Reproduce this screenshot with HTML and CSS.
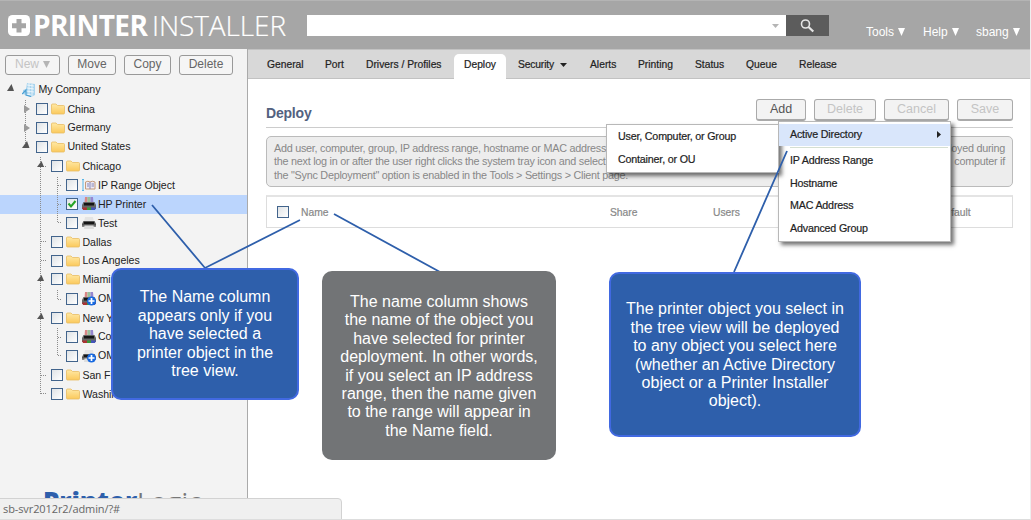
FILE: index.html
```html
<!DOCTYPE html>
<html lang="en">
<head>
<meta charset="utf-8">
<title>Printer Installer</title>
<link rel="stylesheet" href="styles.css">
</head>
<body>
<svg class="defs" width="0" height="0">
  <defs>
    <linearGradient id="fold" x1="0" y1="0" x2="0" y2="1"><stop offset="0" stop-color="#ffe9a6"/><stop offset="1" stop-color="#fbc95c"/></linearGradient>
    <symbol id="folder" viewBox="0 0 14 12"><path d="M.5 2Q.5 1 1.500 1H5L6.500 2.500H12.500Q13.500 2.500 13.500 3.500V10Q13.500 11 12.500 11H1.500Q.5 11 .5 10Z" fill="url(#fold)" stroke="#e9bd62" stroke-width=".8"/></symbol>
    <symbol id="printer" viewBox="0 0 14 14"><path d="M3 1H11L12 6H2Z" fill="#e4e4e4"/><path d="M1.500 5H12.500L14 8V11H0V8Z" fill="#555"/><path d="M2 6H12V8H2Z" fill="#151515"/><path d="M0 9.500H14V11H0Z" fill="#888"/><path d="M2.500 9.500H11.500L12 13H2Z" fill="#ddd"/></symbol>
    <symbol id="color-printer" viewBox="0 0 14 14"><path d="M3 0H5.500V6H2.500Z" fill="#d98686"/><path d="M5.500 0H8.500V6H5.500Z" fill="#9ac09a"/><path d="M8.500 0H11L11.500 6H8.500Z" fill="#9686cf"/><path d="M1.500 5H12.500L14 8V12H0V8Z" fill="#666"/><path d="M2 6H12V8.500H2Z" fill="#151515"/><path d="M0 10.500H5V13H1Z" fill="#a33"/><path d="M5 10.500H9V13H5Z" fill="#3a9a3a"/><path d="M9 10.500H14L13 13H9Z" fill="#45b"/></symbol>
    <symbol id="plus-badge" viewBox="0 0 14 14"><circle cx="9.500" cy="9" r="4.500" fill="#1769e0"/><path d="M9.500 6V12M6.500 9H12.500" stroke="#fff" stroke-width="1.700"/></symbol>
  </defs>
</svg>
<div class="app">
  <header class="header">
    <div class="brand">
      <svg class="brand-mark" width="22" height="21" viewBox="0 0 22 21"><rect width="22" height="21" rx="4.500" fill="#fff"/><path d="M11 4V17.500M4 10.700H18" stroke="#a6a6a6" stroke-width="5"/></svg>
      <span class="brand-bold">PRINTER</span><span class="brand-light">INSTALLER</span>
    </div>
    <div class="search"><div class="search-field"><svg width="7" height="4"><path d="M0 0H7L3.500 4Z" fill="#b5b5b5"/></svg></div>
      <div class="search-btn"><svg width="15" height="14" viewBox="0 0 15 14"><circle cx="5.500" cy="5" r="4" fill="none" stroke="#e6e6e6" stroke-width="1.600"/><path d="M8.500 8L13.300 12.500" stroke="#e6e6e6" stroke-width="2.200"/></svg></div>
    </div>
    <nav class="user-nav">
      <span class="tools">Tools <svg width="7" height="8"><path d="M0 0H7L3.500 8Z" fill="#fff"/></svg></span>
      <span class="help">Help <svg width="7" height="8"><path d="M0 0H7L3.500 8Z" fill="#fff"/></svg></span>
      <span class="user">sbang <svg width="7" height="8"><path d="M0 0H7L3.500 8Z" fill="#fff"/></svg></span>
    </nav>
  </header>
  <div class="body">
    <aside class="sidebar">
      <div class="tree-actions">
        <div class="btn off new">New <svg width="7" height="7"><path d="M0 0H7L3.500 7Z" fill="#b5b5b5"/></svg></div><div class="btn move">Move</div><div class="btn copy">Copy</div><div class="btn del">Delete</div>
      </div>
      <div class="tree">
        <div class="row l0"><svg width="14" height="15" viewBox="0 0 14 15"><path d="M5 1L13 2V13L9 15L1 12V8L4 7Z" fill="#a9d4ee"/><path d="M5 3L12 4M5 6L12 7M4 9L12 10M3 12L9 13M7 1V13M10 2V14" stroke="#fff" stroke-width=".7"/><path d="M0 12L4 8V13L9 14.500" stroke="#4b9fd3" stroke-width="1.200" fill="none"/></svg><span>My Company</span></div>
        <div class="row l1"><i class="check"></i><svg width="14" height="12"><use href="#folder"/></svg><span>China</span></div>
        <div class="row l1"><i class="check"></i><svg width="14" height="12"><use href="#folder"/></svg><span>Germany</span></div>
        <div class="row l1"><i class="check"></i><svg width="14" height="12"><use href="#folder"/></svg><span>United States</span></div>
        <div class="row l2"><i class="check"></i><svg width="14" height="12"><use href="#folder"/></svg><span>Chicago</span></div>
        <div class="row l3"><i class="check"></i><svg width="14" height="12" viewBox="0 0 14 12"><path d="M0 .5H2M0 11.500H2M1 .5V11.500" stroke="#55b4e8" fill="none"/><path d="M3.500 3Q6 1.500 8 3Q10.500 1.500 13 3V10H3.500Z" fill="#eceaf5" stroke="#c49a7a"/><path d="M8 3V10M5 5H7M5 7H7M9.500 5H12M9.500 7H12" stroke="#8585b5"/></svg><span>IP Range Object</span></div>
        <div class="row l3 selected"><i class="check"><svg width="10" height="10" viewBox="0 0 10 10"><path d="M1.500 4.500L4 7.500L8.500 2" fill="none" stroke="#25a325" stroke-width="2"/></svg></i><svg width="14" height="14"><use href="#color-printer"/></svg><span>HP Printer</span></div>
        <div class="row l3"><i class="check"></i><svg width="14" height="14"><use href="#printer"/></svg><span>Test</span></div>
        <div class="row l2"><i class="check"></i><svg width="14" height="12"><use href="#folder"/></svg><span>Dallas</span></div>
        <div class="row l2"><i class="check"></i><svg width="14" height="12"><use href="#folder"/></svg><span>Los Angeles</span></div>
        <div class="row l2"><i class="check"></i><svg width="14" height="12"><use href="#folder"/></svg><span>Miami</span></div>
        <div class="row l3"><i class="check"></i><svg width="14" height="14"><use href="#color-printer"/><use href="#plus-badge"/></svg><span>OM</span></div>
        <div class="row l2"><i class="check"></i><svg width="14" height="12"><use href="#folder"/></svg><span>New Y</span></div>
        <div class="row l3"><i class="check"></i><svg width="14" height="14"><use href="#color-printer"/></svg><span>Co</span></div>
        <div class="row l3"><i class="check"></i><svg width="14" height="14"><use href="#printer"/><use href="#plus-badge"/></svg><span>OM</span></div>
        <div class="row l2"><i class="check"></i><svg width="14" height="12"><use href="#folder"/></svg><span>San Fr</span></div>
        <div class="row l2"><i class="check"></i><svg width="14" height="12"><use href="#folder"/></svg><span>Washin</span></div>
        <svg class="guides" width="70" height="330" viewBox="0 80 70 330">
          <g fill="none" stroke="#8c8c8c" stroke-dasharray="1 1">
            <path d="M25.500 100V146M40.500 157V394M57.500 177V223M57.500 290V299M57.500 328V356"/>
            <path d="M41 166.500H46M41 241.500H46M41 260.500H46M41 375.500H46M41 393.500H46M58 185.500H62M58 204.500H62M58 222.500H62M58 299.500H62M58 337.500H62M58 355.500H62"/>
          </g>
          <g fill="#555"><path d="M11.500 84L14 91H7Z"/><path d="M27 141L29.500 148H22Z"/><path d="M41.500 161L44 167H37Z"/><path d="M41.500 275L44 281H37Z"/><path d="M41.500 313L44 319H37Z"/></g>
          <g fill="#999"><path d="M24 105L30 109L24 113Z"/><path d="M24 124L30 128L24 132Z"/></g>
        </svg>
      </div>
      <div class="vendor"><b>Printer</b><span>Logic</span></div>
    </aside>
    <main class="main">
      <nav class="tabs">
        <span class="tab t1">General</span><span class="tab t2">Port</span><span class="tab t3">Drivers / Profiles</span><span class="tab active">Deploy</span><span class="tab t5">Security <svg width="7" height="4"><path d="M0 0H7L3.500 4Z" fill="#222"/></svg></span><span class="tab t6">Alerts</span><span class="tab t7">Printing</span><span class="tab t8">Status</span><span class="tab t9">Queue</span><span class="tab t10">Release</span>
      </nav>
      <div class="content">
        <div class="title-row">
          <h1>Deploy</h1>
          <div class="actions">
            <div class="btn big add">Add
              <div class="menu">
                <div class="item hot">Active Directory<svg width="4" height="7"><path d="M0 0L4 3.500L0 7Z" fill="#222"/></svg></div>
                <div class="sep"></div>
                <div class="item">IP Address Range</div><div class="item">Hostname</div><div class="item">MAC Address</div><div class="item">Advanced Group</div>
                <div class="submenu"><div class="item">User, Computer, or Group</div><div class="item">Container, or OU</div></div>
              </div>
            </div>
            <div class="btn big off delete">Delete</div><div class="btn big off cancel">Cancel</div><div class="btn big off save">Save</div>
          </div>
        </div>
        <div class="info">
          <div><span>Add user, computer, group, IP address range, hostname or MAC address</span><span>deployed during</span></div>
          <div><span>the next log in or after the user right clicks the system tray icon and select</span><span>computer if</span></div>
          <div><span>the "Sync Deployment" option is enabled in the Tools &gt; Settings &gt; Client page.</span></div>
        </div>
        <div class="table-head"><i class="check"></i><span class="c-name">Name</span><span class="c-share">Share</span><span class="c-users">Users</span><span class="c-default">Default</span></div>
      </div>
    </main>
  </div>
  <div class="status">sb-svr2012r2/admin/?#</div>
  <svg class="pointers" width="1031" height="520"><path d="M152 205L205 268L300 220M334 214L440 272M787 151L734 272" fill="none" stroke="#2e5fab" stroke-width="1.800"/></svg>
  <div class="callout blue c1">The Name column<br>appears only if you<br>have selected a<br>printer object in the<br>tree view.</div>
  <div class="callout gray c2">The name column shows<br>the name of the object you<br>have selected for printer<br>deployment. In other words,<br>if you select an IP address<br>range, then the name given<br>to the range will appear in<br>the Name field.</div>
  <div class="callout blue c3">The printer object you select in<br>the tree view will be deployed<br>to any object you select here<br>(whether an Active Directory<br>object or a Printer Installer<br>object).</div>
</div>
</body>
</html>
```
FILE: styles.css
```css
* { box-sizing: border-box; }
body { margin: 0; background: #fff; font-family: "Liberation Sans", Arial, sans-serif; font-size: 11px; color: #222; }
svg { display: block; flex: none; }
.defs { position: absolute; }
.app { position: relative; width: 1031px; height: 520px; overflow: hidden; display: flex; flex-direction: column; border-right: 1px solid #eee; border-bottom: 1px solid #ddd; white-space: nowrap; }

.header { height: 49px; flex: none; background: #a6a6a6; border-top: 1px solid #b4b4b4; display: flex; align-items: flex-start; }
.brand { width: 307px; height: 48px; padding: 14px 0 0 8px; display: flex; font-family: "Open Sans", sans-serif; color: #fff; font-size: 28px; line-height: 20px; }
.brand-mark { margin-right: 3px; }
.brand-bold { width: 119px; font-weight: 700; letter-spacing: -.6px; }
.brand-light { font-weight: 300; letter-spacing: -.1px; -webkit-text-stroke: .2px #fff; }
.search { display: flex; margin-top: 14px; height: 21px; }
.search-field { width: 479px; background: #fff; display: flex; justify-content: flex-end; align-items: center; padding-right: 7px; }
.search-btn { width: 43px; background: #5c5c5c; display: flex; align-items: center; justify-content: center; }
.user-nav { display: flex; color: #fff; font-size: 12px; line-height: 14px; padding: 23px 0 0 37px; }
.user-nav span { display: flex; gap: 4px; align-items: center; }
.tools { width: 57px; }
.help { width: 53px; padding-top: 1px; }
.user { padding-top: 1px; }

.body { display: flex; flex: 1; min-height: 0; }
.sidebar { width: 248px; background: #f3f3f3; border-right: 1px solid #aaa; display: flex; flex-direction: column; flex: none; }
.tree-actions { display: flex; gap: 8px; padding: 6px 0 0 5px; height: 31px; }
.btn { height: 20px; border: 1px solid #999; border-radius: 3px; color: #666; font-size: 12px; line-height: 17px; display: flex; align-items: center; justify-content: center; gap: 4px; background: #f5f5f5; padding-bottom: 1px; }
.btn.off { color: #c4c4c4; }
.new { width: 55px; }
.move { width: 48px; }
.copy { width: 47px; }
.del { width: 54px; }
.tree { position: relative; display: grid; grid-template-rows: 20px 19px 18px 20px 19px 19px 19px 19px 19px 18px 19px 20px 19px 18px 20px 19px 19px; }
.row { display: flex; align-items: center; padding-bottom: 1px; font-size: 10.6px; line-height: 17px; letter-spacing: -.05px; color: #222; }
.row > svg { margin: 0 2.5px 0 3px; }
.row.l3 > svg { margin: 0 2px 0 4px; }
.l0 { padding-left: 19px; }
.l1 { padding-left: 36px; }
.l2 { padding-left: 51px; }
.l3 { padding-left: 66px; }
.selected { background: #bbd5fd; }
.check { width: 12px; height: 12px; flex: none; border: 1px solid #42648c; background: linear-gradient(135deg, #dfe3e6, #fff); }
.guides { position: absolute; left: 0; top: 0; }
.vendor { margin-top: auto; height: 37px; padding-left: 43px; overflow: hidden; font-family: "Open Sans", sans-serif; font-size: 26px; line-height: 38px; letter-spacing: .4px; color: #777; }
.vendor b { font-weight: 800; color: #2e5fab; letter-spacing: -.1px; }

.main { flex: 1; min-width: 0; }
.tabs { height: 30px; background: #d8d8d8; border-top: 1px solid #c2c2c2; border-bottom: 1px solid #c2c2c2; padding: 4px 0 0 19px; display: flex; font-size: 10.3px; line-height: 22px; }
.tab { flex: none; -webkit-text-stroke: .2px #222; }
.t1 { width: 58px; }
.t2 { width: 41px; }
.t3 { width: 88px; }
.active { width: 52px; height: 25px; background: #fff; border-radius: 5px 5px 0 0; text-align: center; }
.t5 { width: 72px; height: 22px; margin-left: 12px; display: flex; gap: 6px; align-items: center; letter-spacing: -.15px; }
.t6 { width: 48px; }
.t7 { width: 57px; }
.t8 { width: 51px; }
.t9 { width: 53px; }
.content { padding: 20px 17px 0 18px; }
.title-row { height: 29px; border-bottom: 1px solid #ccc; display: flex; justify-content: space-between; }
h1 { margin: 6px 0 0; font-size: 14px; line-height: 17px; letter-spacing: -.2px; color: #53617f; }
.actions { display: flex; }
.btn.big { height: 22px; border: 1px solid #aaa; border-bottom-width: 2px; font-size: 12.500px; background: #f3f3f3; }
.add { width: 50px; position: relative; color: #555; }
.delete { width: 62px; margin-left: 8px; }
.cancel { width: 65px; margin-left: 8px; }
.save { width: 56px; margin-left: 8px; }
.menu { position: absolute; z-index: 2; left: 21px; top: 21px; width: 173px; height: 121px; padding-top: 2px; background: #fff; border: 1px solid #b8b8b8; box-shadow: 3px 3px 4px rgba(0,0,0,.55); color: #222; font-size: 10.7px; letter-spacing: -.18px; -webkit-text-stroke: .2px #222; }
.item { height: 22.500px; line-height: 21px; padding-left: 11px; }
.item.hot { background: #d9e6fb; display: flex; align-items: center; justify-content: space-between; padding-right: 9px; height: 22px; line-height: 19px; padding-bottom: 2px; }
.sep { height: 1px; background: #d5dfd2; margin: 1px 2px 2px 11px; }
.submenu { position: absolute; z-index: -1; left: -173px; top: 2px; width: 173px; height: 49px; background: #fff; border: 1px solid #b8b8b8; box-shadow: 3px 3px 4px rgba(0,0,0,.55); padding-top: 1px; }
.info { margin-top: 8px; height: 51px; border: 1px solid #bbb; border-radius: 5px; background: #ededed; color: #888; font-size: 10.800px; letter-spacing: -.25px; line-height: 13.300px; padding: 5px 7px; }
.info div { display: flex; justify-content: space-between; }
.table-head { margin-top: 8px; height: 33px; border: 1px solid #ddd; border-top: 2px solid #e4e4e4; display: flex; align-items: center; padding-left: 10px; color: #888; font-size: 10.3px; -webkit-text-stroke: .2px #888; }
.c-name { margin-left: 12px; width: 309px; }
.c-share { width: 103px; }
.c-users { width: 225px; }
.c-default { flex: 1; }

.status { position: absolute; left: -1px; bottom: -1px; width: 343px; height: 22px; background: #f0f0f0; border: 1px solid #d2d2d2; border-radius: 0 4px 0 0; font-family: "Open Sans", sans-serif; font-size: 11px; line-height: 20px; color: #666; padding-left: 3px; letter-spacing: -.1px; }
.pointers { position: absolute; left: 0; top: 0; z-index: 3; }
.callout { position: absolute; z-index: 4; display: flex; align-items: center; justify-content: center; text-align: center; color: #fff; font-size: 16px; line-height: 18.400px; border-radius: 10px; }
.blue { background: #2e5fab; border: 2px solid #4169e1; }
.gray { background: #727476; }
.c1 { left: 111px; top: 268px; width: 188px; height: 132px; padding-top: 1px; }
.c2 { left: 322px; top: 271px; width: 234px; height: 189px; padding-top: 2px; }
.c3 { left: 609px; top: 272px; width: 252px; height: 165px; padding-top: 2px; }
```
